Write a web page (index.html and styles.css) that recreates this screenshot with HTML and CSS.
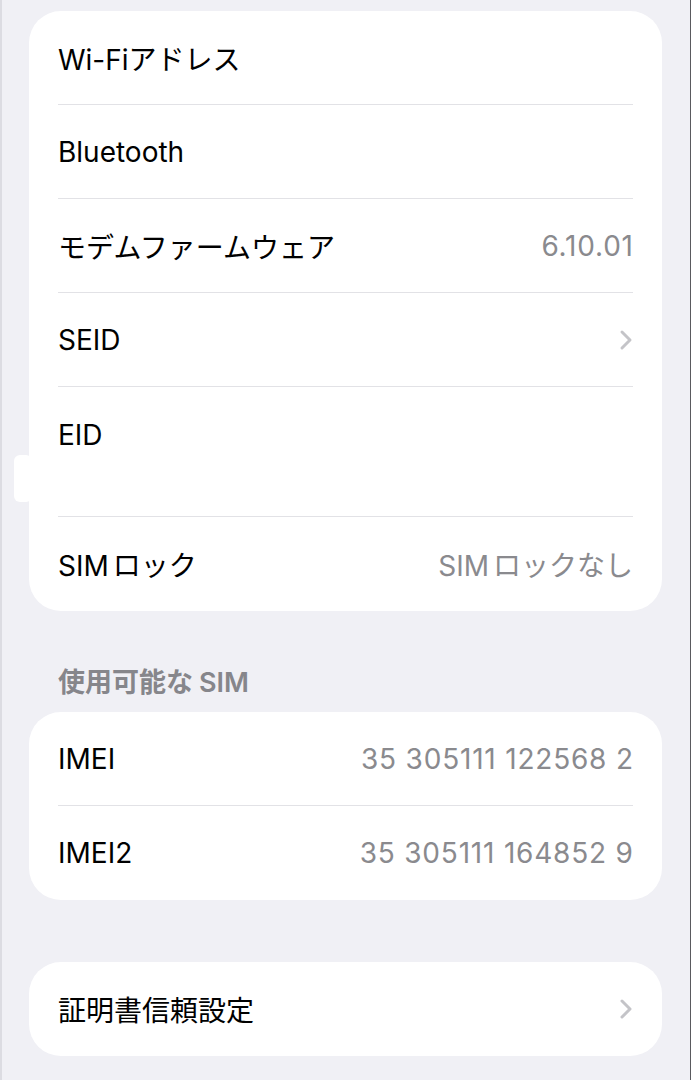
FILE: index.html
```html
<!DOCTYPE html>
<html lang="ja">
<head>
    <meta charset="utf-8">
    <title>情報</title>
    <link rel="stylesheet" href="styles.css">
</head>
<body>
    <main class="page">
        <section class="group">
            <div class="row"><span class="label">Wi-Fiアドレス</span></div>
            <div class="row"><span class="label">Bluetooth</span></div>
            <div class="row">
                <span class="label">モデムファームウェア</span>
                <span class="value number">6.10.01</span>
            </div>
            <div class="row">
                <span class="label">SEID</span>
                <svg class="chevron" width="14" height="22" viewBox="0 0 14 22"><path d="M3 3 L11 11 L3 19" /></svg>
            </div>
            <div class="row row-tall"><span class="label">EID</span></div>
            <div class="row">
                <span class="label"><span class="latin">SIM</span>ロック</span>
                <span class="value"><span class="latin">SIM</span>ロックなし</span>
            </div>
            <span class="smudge"></span>
        </section>

        <h2 class="group-title">使用可能な<span class="latin">SIM</span></h2>
        <section class="group">
            <div class="row">
                <span class="label">IMEI</span>
                <span class="value number">35 305111 122568 2</span>
            </div>
            <div class="row">
                <span class="label">IMEI2</span>
                <span class="value number">35 305111 164852 9</span>
            </div>
        </section>

        <section class="group group-spaced">
            <div class="row">
                <span class="label">証明書信頼設定</span>
                <svg class="chevron" width="14" height="22" viewBox="0 0 14 22"><path d="M3 3 L11 11 L3 19" /></svg>
            </div>
        </section>
    </main>
</body>
</html>
```

FILE: styles.css
```css
html, body {
    margin: 0;
    height: 100%;
}

body {
    background-color: #f0f0f5;
    border-left: 2px solid #dcdce2;
    border-right: 1px solid #5a5a5e;
    font-family: Inter, "Noto Sans CJK JP", sans-serif;
    color: #000;
    overflow: hidden;
}

.page {
    padding: 11px 28px 0 27px;
}

.group {
    position: relative;
    background-color: #fff;
    border-radius: 32px;
}

.group-spaced {
    margin-top: 62px;
}

.row {
    display: flex;
    justify-content: space-between;
    align-items: center;
    box-sizing: border-box;
    height: 94px;
    margin: 0 29px;
    border-bottom: 1px solid #e2e2e6;
    font-size: 28px;
}

.row:last-of-type {
    border-bottom: none;
}

.row-tall {
    height: 130px;
    align-items: flex-start;
    padding-top: 31px;
}

.latin {
    margin-right: 4px;
}

.value {
    color: #8a8a8e;
}

.number {
    letter-spacing: 0.8px;
    margin-right: -0.8px;
}

.chevron path {
    fill: none;
    stroke: #c4c4c8;
    stroke-width: 3;
    stroke-linecap: round;
    stroke-linejoin: round;
}

.group-title {
    margin: 0;
    padding: 56px 29px 13px;
    font-size: 27px;
    line-height: 32px;
    font-weight: 600;
    color: #86868b;
}

.group-title .latin {
    margin: 0 0 0 6px;
}

.smudge {
    position: absolute;
    left: -15px;
    top: 444px;
    width: 18px;
    height: 47px;
    border-radius: 6px;
    background-color: #fff;
}
```
